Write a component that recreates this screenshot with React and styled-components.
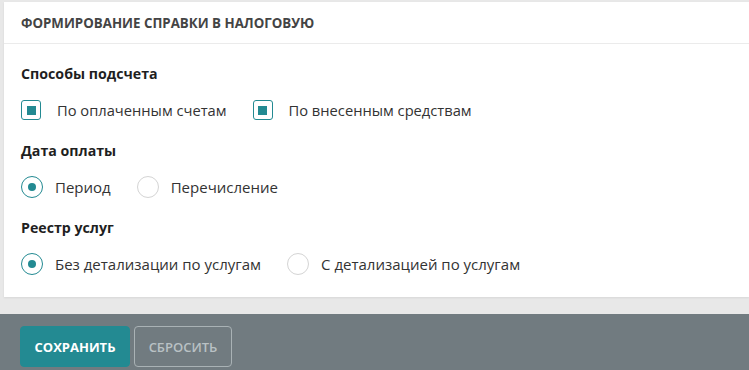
import React, { useState } from "react";
import styled, { createGlobalStyle } from "styled-components";

const Global = createGlobalStyle`
  html, body { margin: 0; padding: 0; background: #e8e8e8; }
  body { font-family: "Open Sans", "Liberation Sans", sans-serif; color: #2f2f2f; }
  * { box-sizing: border-box; }
`;

const Page = styled.div`
  width: 749px;
  height: 370px;
  overflow: hidden;
  display: flex;
  flex-direction: column;
  background: #e8e8e8;
`;

const Card = styled.section`
  margin: 2px 0 0 4px;
  background: #fff;
  box-shadow: 0 1px 2px rgba(0, 0, 0, 0.08);
`;

const CardHeader = styled.header`
  height: 42px;
  display: flex;
  align-items: center;
  padding: 0 17px;
  border-bottom: 1px solid #ebebeb;
  font-size: 13.3px;
  font-weight: 700;
  text-transform: uppercase;
  color: #444;
`;

const CardBody = styled.div`
  padding: 20px 17px 22px;
  display: flex;
  flex-direction: column;
  gap: 20px;
`;

const Section = styled.div`
  display: flex;
  flex-direction: column;
  gap: 15px;
`;

const Title = styled.div`
  font-size: 14.2px;
  font-weight: 700;
  line-height: 20px;
  color: #1f1f1f;
`;

const Options = styled.div`
  display: flex;
  align-items: center;
  gap: ${(p) => (p.$tight ? "22px" : "26px")};
  height: 22px;
`;

const Option = styled.label`
  display: flex;
  align-items: center;
  gap: ${(p) => (p.$kind === "check" ? "16px" : "12px")};
  font-size: ${(p) => (p.$kind === "check" ? "14.7px" : "15px")};
  color: #333;
  cursor: pointer;
  user-select: none;
`;

const CheckBox = styled.span`
  width: 20px;
  height: 20px;
  border: 1.5px solid ${(p) => (p.$on ? "#238a92" : "#cfcfcf")};
  border-radius: 3px;
  display: flex;
  align-items: center;
  justify-content: center;
  &::after {
    content: "";
    width: 9px;
    height: 9px;
    background: ${(p) => (p.$on ? "#238a92" : "transparent")};
  }
`;

const Radio = styled.span`
  width: 22px;
  height: 22px;
  border-radius: 50%;
  border: 1.5px solid ${(p) => (p.$on ? "#238a92" : "#d4d4d4")};
  display: flex;
  align-items: center;
  justify-content: center;
  &::after {
    content: "";
    width: 8px;
    height: 8px;
    border-radius: 50%;
    background: ${(p) => (p.$on ? "#238a92" : "transparent")};
  }
`;

const Gap = styled.div`
  height: 17px;
  flex: none;
`;

const Footer = styled.footer`
  flex: 1;
  background: #717b80;
  display: flex;
  align-items: flex-start;
  gap: 4px;
  padding: 12px 20px 0;
`;

const Button = styled.button`
  height: 41px;
  padding: 0;
  border-radius: 4px;
  font-family: "Open Sans", "Liberation Sans", sans-serif;
  font-size: 13px;
  font-weight: ${(p) => (p.$primary ? 700 : 600)};
  text-transform: uppercase;
  cursor: pointer;
  background: ${(p) => (p.$primary ? "#238a92" : "transparent")};
  color: ${(p) => (p.$primary ? "#fff" : "#b9c1c4")};
  border: 1px solid ${(p) => (p.$primary ? "#238a92" : "#a9b2b5")};
  width: ${(p) => p.$w}px;
`;

export default function App() {
  const [checks, setChecks] = useState({ paid: true, deposited: true });
  const [date, setDate] = useState("period");
  const [reg, setReg] = useState("none");

  return (
    <Page>
      <Global />
      <Card>
        <CardHeader>Формирование справки в налоговую</CardHeader>
        <CardBody>
          <Section>
            <Title>Способы подсчета</Title>
            <Options>
              <Option $kind="check" onClick={() => setChecks({ ...checks, paid: !checks.paid })}>
                <CheckBox $on={checks.paid} />
                По оплаченным счетам
              </Option>
              <Option $kind="check" onClick={() => setChecks({ ...checks, deposited: !checks.deposited })}>
                <CheckBox $on={checks.deposited} />
                По внесенным средствам
              </Option>
            </Options>
          </Section>
          <Section>
            <Title>Дата оплаты</Title>
            <Options>
              <Option onClick={() => setDate("period")}>
                <Radio $on={date === "period"} />
                Период
              </Option>
              <Option onClick={() => setDate("transfer")}>
                <Radio $on={date === "transfer"} />
                Перечисление
              </Option>
            </Options>
          </Section>
          <Section>
            <Title>Реестр услуг</Title>
            <Options>
              <Option onClick={() => setReg("none")}>
                <Radio $on={reg === "none"} />
                Без детализации по услугам
              </Option>
              <Option onClick={() => setReg("detail")}>
                <Radio $on={reg === "detail"} />
                С детализацией по услугам
              </Option>
            </Options>
          </Section>
        </CardBody>
      </Card>
      <Gap />
      <Footer>
        <Button $primary $w={110}>Сохранить</Button>
        <Button $w={98}>Сбросить</Button>
      </Footer>
    </Page>
  );
}
